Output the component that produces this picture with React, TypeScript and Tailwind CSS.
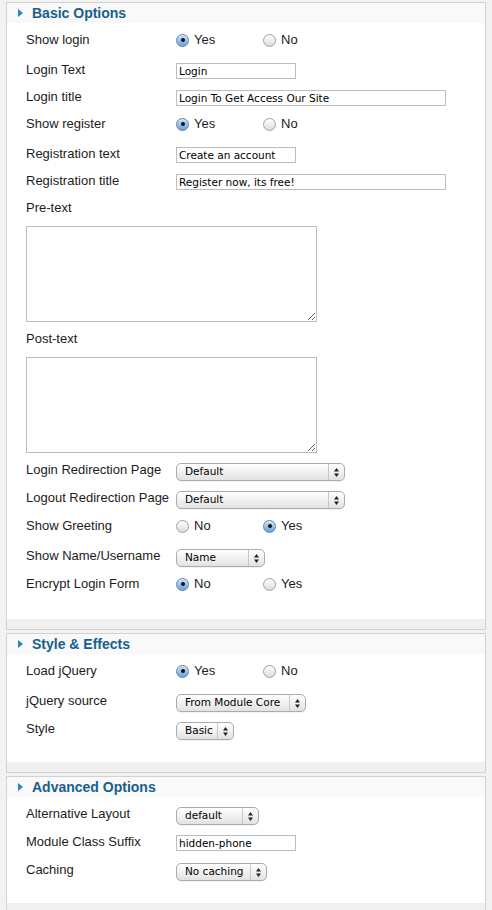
import type { ReactNode } from "react";

const LABEL = "w-[150px] shrink-0 leading-[18px] text-[13px] text-[#1c1c1c]";
const CTRL_FONT = { fontFamily: '"DejaVu Sans", Verdana, sans-serif' };

const Panel = ({ title, children }: { title: string; children: ReactNode }) => (
    <div className="ml-[6px] w-[480px] border border-[#d2d2d2] bg-[#f0f0f0]">
        <div className="h-[20px] bg-[#f9f9f9] flex items-center pl-[11px]">
            <svg width="5" height="8" viewBox="0 0 5 8" className="shrink-0">
                <path d="M0 0 L5 4 L0 8 Z" fill="#2487bd" />
            </svg>
            <span className="ml-[9px] text-[14px] font-bold text-[#175f8f] leading-none">
                {title}
            </span>
        </div>
        <div className="bg-white pl-[19px] pt-[8px] pb-[14px]">{children}</div>
        <div className="h-[10px]" />
    </div>
);

const Row = ({ label, h, children }: { label: string; h: string; children: ReactNode }) => (
    <div className={`flex items-start ${h}`}>
        <div className={LABEL}>{label}</div>
        {children}
    </div>
);

const Radio = ({ checked, text }: { checked?: boolean; text: string }) => (
    <div className="w-[87px] flex items-center gap-[5px] leading-[18px] text-[13px] text-[#1c1c1c]">
        {checked ? (
            <span className="w-[13px] h-[13px] rounded-full border border-[#5d7fa8] bg-linear-to-b from-[#c5dcf3] to-[#6aa3dc] flex items-center justify-center shadow-[inset_0_1px_1px_rgba(255,255,255,0.6)]">
                <span className="w-[4px] h-[4px] rounded-full bg-[#111]" />
            </span>
        ) : (
            <span className="w-[13px] h-[13px] rounded-full border border-[#a0a0a0] bg-linear-to-b from-[#ffffff] to-[#dcdcdc]" />
        )}
        <span>{text}</span>
    </div>
);

const Radios = ({ a, b, first }: { a: string; b: string; first: boolean }) => (
    <div className="flex">
        <Radio text={a} checked={first} />
        <Radio text={b} checked={!first} />
    </div>
);

const TextInput = ({ value, w }: { value: string; w: string }) => (
    <input
        defaultValue={value}
        style={CTRL_FONT}
        className={`mt-[2px] h-[16px] ${w} border border-[#bdbdbd] bg-white px-[2px] text-[10.5px] text-black outline-none`}
    />
);

const Select = ({ value, w }: { value: string; w: string }) => (
    <div
        style={CTRL_FONT}
        className={`mt-[2px] h-[18px] ${w} rounded-[5px] border border-[#ababab] bg-linear-to-b from-[#ffffff] via-[#f1f1f1] to-[#e2e2e2] flex items-center text-[10.5px] text-black shadow-[0_1px_0_rgba(0,0,0,0.05)]`}
    >
        <span className="pl-[8px] grow">{value}</span>
        <span className="w-[16px] h-full border-l border-[#c8c8c8] flex items-center justify-center">
            <svg width="5" height="9" viewBox="0 0 5 9">
                <path d="M2.5 0 L5 3.5 L0 3.5 Z" fill="#222" />
                <path d="M0 5.5 L5 5.5 L2.5 9 Z" fill="#222" />
            </svg>
        </span>
    </div>
);

const TextArea = () => (
    <textarea className="block w-[291px] h-[96px] border border-[#bdbdbd] bg-white outline-none" />
);

export default function App() {
    return (
        <div
            className="min-h-[910px] bg-[#f2f2f2] pt-[2px] flex flex-col gap-[3px]"
            style={{ fontFamily: '"Liberation Sans", Arial, sans-serif' }}
        >
            <Panel title="Basic Options">
                <Row label="Show login" h="h-[30px]">
                    <Radios a="Yes" b="No" first />
                </Row>
                <Row label="Login Text" h="h-[27px]">
                    <TextInput value="Login" w="w-[120px]" />
                </Row>
                <Row label="Login title" h="h-[27px]">
                    <TextInput value="Login To Get Access Our Site" w="w-[270px]" />
                </Row>
                <Row label="Show register" h="h-[30px]">
                    <Radios a="Yes" b="No" first />
                </Row>
                <Row label="Registration text" h="h-[27px]">
                    <TextInput value="Create an account" w="w-[120px]" />
                </Row>
                <Row label="Registration title" h="h-[27px]">
                    <TextInput value="Register now, its free!" w="w-[270px]" />
                </Row>
                <div className={`${LABEL} mb-[9px]`}>Pre-text</div>
                <TextArea />
                <div className={`${LABEL} mt-[8px] mb-[9px]`}>Post-text</div>
                <TextArea />
                <div className="mt-[8px]" />
                <Row label="Login Redirection Page" h="h-[28px]">
                    <Select value="Default" w="w-[169px]" />
                </Row>
                <Row label="Logout Redirection Page" h="h-[28px]">
                    <Select value="Default" w="w-[169px]" />
                </Row>
                <Row label="Show Greeting" h="h-[30px]">
                    <Radios a="No" b="Yes" first={false} />
                </Row>
                <Row label="Show Name/Username" h="h-[28px]">
                    <Select value="Name" w="w-[89px]" />
                </Row>
                <Row label="Encrypt Login Form" h="h-[30px]">
                    <Radios a="No" b="Yes" first />
                </Row>
            </Panel>

            <Panel title="Style & Effects">
                <Row label="Load jQuery" h="h-[30px]">
                    <Radios a="Yes" b="No" first />
                </Row>
                <Row label="jQuery source" h="h-[28px]">
                    <Select value="From Module Core" w="w-[130px]" />
                </Row>
                <Row label="Style" h="h-[28px]">
                    <Select value="Basic" w="w-[58px]" />
                </Row>
            </Panel>

            <Panel title="Advanced Options">
                <Row label="Alternative Layout" h="h-[28px]">
                    <Select value="default" w="w-[83px]" />
                </Row>
                <Row label="Module Class Suffix" h="h-[28px]">
                    <TextInput value="hidden-phone" w="w-[120px]" />
                </Row>
                <Row label="Caching" h="h-[28px]">
                    <Select value="No caching" w="w-[91px]" />
                </Row>
            </Panel>
        </div>
    );
}
